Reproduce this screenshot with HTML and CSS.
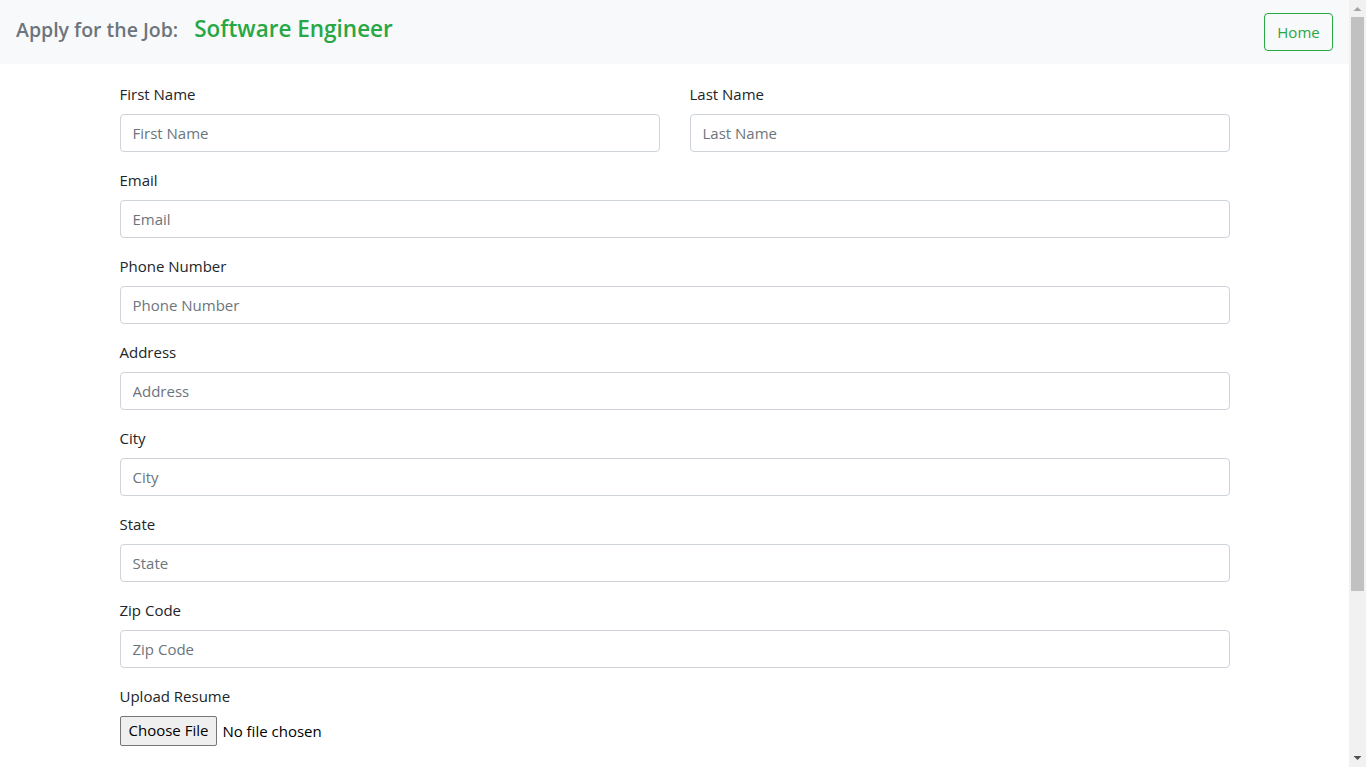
FILE: index.html
```html
<!DOCTYPE html>
<html lang="en">
<head>
<meta charset="utf-8">
<title>Apply for the Job</title>
<link rel="stylesheet" href="styles.css">
</head>
<body>
<div class="page">
  <nav class="navbar">
    <div class="brand">
      <span class="brand-label">Apply for the Job:</span>
      <span class="brand-job">Software Engineer</span>
    </div>
    <a class="btn-home" href="#">Home</a>
  </nav>
  <main class="container">
    <form class="apply-form">
      <div class="row">
        <div class="field">
          <label for="fn">First Name</label>
          <input id="fn" type="text" placeholder="First Name">
        </div>
        <div class="field">
          <label for="ln">Last Name</label>
          <input id="ln" type="text" placeholder="Last Name">
        </div>
      </div>
      <div class="field">
        <label for="em">Email</label>
        <input id="em" type="email" placeholder="Email">
      </div>
      <div class="field">
        <label for="ph">Phone Number</label>
        <input id="ph" type="text" placeholder="Phone Number">
      </div>
      <div class="field">
        <label for="ad">Address</label>
        <input id="ad" type="text" placeholder="Address">
      </div>
      <div class="field">
        <label for="ci">City</label>
        <input id="ci" type="text" placeholder="City">
      </div>
      <div class="field">
        <label for="st">State</label>
        <input id="st" type="text" placeholder="State">
      </div>
      <div class="field">
        <label for="zc">Zip Code</label>
        <input id="zc" type="text" placeholder="Zip Code">
      </div>
      <div class="field">
        <label>Upload Resume</label>
        <div class="file-row">
          <span class="file-btn">Choose File</span>
          <span class="file-text">No file chosen</span>
        </div>
      </div>
    </form>
  </main>
</div>
<div class="scrollbar" aria-hidden="true">
  <div class="sb-arrow sb-up"><svg width="17" height="17" viewBox="0 0 17 17"><path d="M4.5 11 L8.5 7 L12.5 11 Z" fill="#a3a3a3"/></svg></div>
  <div class="sb-thumb"></div>
  <div class="sb-space"></div>
  <div class="sb-arrow sb-down"><svg width="17" height="17" viewBox="0 0 17 17"><path d="M4.5 6 L8.5 10 L12.5 6 Z" fill="#505050"/></svg></div>
</div>
</body>
</html>
```

FILE: styles.css
```css
* { box-sizing: border-box; }
html, body { margin: 0; }
body {
  font-family: "Open Sans", "Noto Sans", "Liberation Sans", sans-serif;
  font-size: 16px;
  line-height: 1.5;
  color: #212529;
  background: #fff;
  display: flex;
  height: 100vh;
  overflow: hidden;
}
.page {
  flex: 1;
  min-width: 0;
  overflow: hidden;
}
.navbar {
  height: 64px;
  background: #f8f9fa;
  display: flex;
  align-items: center;
  justify-content: space-between;
  padding: 0 16px;
}
.brand {
  display: flex;
  align-items: baseline;
  gap: 16px;
  margin-top: -7px;
}
.brand-label {
  font-size: 19.5px;
  font-weight: 600;
  color: #6c757d;
}
.brand-job {
  font-size: 22.5px;
  font-weight: 600;
  color: #28a745;
}
.btn-home {
  display: inline-flex;
  align-items: center;
  justify-content: center;
  height: 38px;
  width: 69px;
  border: 1px solid #28a745;
  border-radius: 4px;
  color: #28a745;
  text-decoration: none;
  font-size: 15px;
}
.container {
  width: 1110px;
  margin: 18px auto 0;
}
.row {
  display: grid;
  grid-template-columns: 1fr 1fr;
  column-gap: 30px;
}
.field { margin-bottom: 16px; }
.field label {
  display: block;
  margin-bottom: 8px;
  font-size: 15px;
  line-height: 24px;
}
.field input {
  display: block;
  width: 100%;
  height: 38px;
  padding: 6px 12px;
  font-family: inherit;
  font-size: 15px;
  color: #495057;
  border: 1px solid #ced4da;
  border-radius: 4px;
  background: #fff;
}
.field input::placeholder { color: #6c757d; opacity: 1; }
.file-row {
  display: flex;
  align-items: center;
  gap: 5px;
  height: 30px;
}
.file-btn {
  display: inline-block;
  height: 30px;
  line-height: 27px;
  padding: 0 8px;
  background: #efefef;
  border: 1px solid #767676;
  border-radius: 2px;
  font-size: 15px;
  color: #000;
}
.file-text { font-size: 15px; color: #000; }
.scrollbar {
  flex: 0 0 17px;
  width: 17px;
  height: 100vh;
  background: #f1f1f1;
  display: flex;
  flex-direction: column;
}
.sb-arrow { height: 17px; flex: 0 0 17px; }
.sb-arrow svg { display: block; }
.sb-thumb {
  flex: 0 0 574px;
  margin: 0 2px;
  background: #c1c1c1;
}
.sb-space { flex: 1; }
```
